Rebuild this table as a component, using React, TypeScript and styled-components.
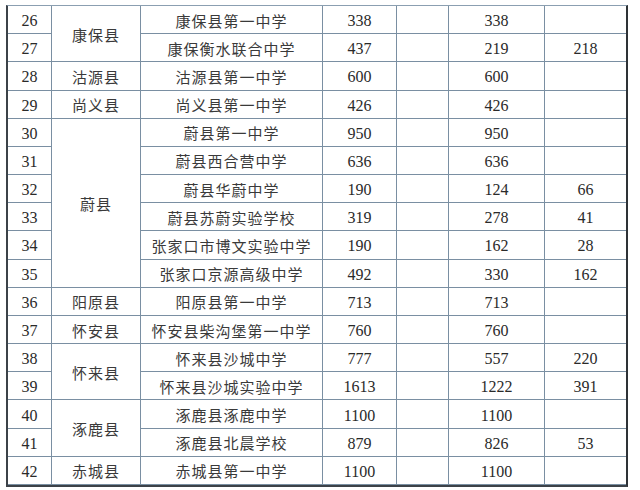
import React from "react";
import styled, { createGlobalStyle } from "styled-components";

const Global = createGlobalStyle`
  html, body { margin: 0; padding: 0; background: #ffffff; }
  body { width: 640px; height: 490px; overflow: hidden; }
`;

const Page = styled.div`
  padding: 5px 0 0 6px;
`;

const Grid = styled.div`
  display: grid;
  grid-template-columns: 44px 89px 182px 74px 52px 96px 81px;
  grid-template-rows: repeat(17, 1fr);
  height: 479px;
  width: 618px;
  border-top: 1px solid #8b9fb1;
  border-left: 2px solid #3c4248;
  border-right: 2px solid #2e3236;
  border-bottom: 2px solid #3c4248;
  color: #2a2a2a;
`;

const Cell = styled.div<{ $span?: number; $last?: boolean }>`
  display: flex;
  align-items: center;
  justify-content: center;
  padding-top: 3px;
  box-sizing: border-box;
  border-right: ${(p) => (p.$last ? "none" : "1px solid #7a8fa2")};
  border-bottom: 1px solid #7a8fa2;
  grid-row: ${(p) => (p.$span ? `span ${p.$span}` : "auto")};
  font-family: "Liberation Serif", serif;
  font-size: 16px;
  white-space: nowrap;
`;

const TextCell = styled(Cell)`
  font-family: "Noto Sans CJK SC", sans-serif;
  font-size: 15px;
  font-weight: 400;
  letter-spacing: 1px;
  padding-top: 1px;
  color: #3a3a3a;
`;

type Row = {
  n: number;
  county?: string;
  span?: number;
  school: string;
  total: string;
  a: string;
  b: string;
};

const H = "\u6000";

const rows: Row[] = [
  { n: 26, county: "康保县", span: 2, school: "康保县第一中学", total: "338", a: "338", b: "" },
  { n: 27, school: "康保衡水联合中学", total: "437", a: "219", b: "218" },
  { n: 28, county: "沽源县", span: 1, school: "沽源县第一中学", total: "600", a: "600", b: "" },
  { n: 29, county: "尚义县", span: 1, school: "尚义县第一中学", total: "426", a: "426", b: "" },
  { n: 30, county: "蔚县", span: 6, school: "蔚县第一中学", total: "950", a: "950", b: "" },
  { n: 31, school: "蔚县西合营中学", total: "636", a: "636", b: "" },
  { n: 32, school: "蔚县华蔚中学", total: "190", a: "124", b: "66" },
  { n: 33, school: "蔚县苏蔚实验学校", total: "319", a: "278", b: "41" },
  { n: 34, school: "张家口市博文实验中学", total: "190", a: "162", b: "28" },
  { n: 35, school: "张家口京源高级中学", total: "492", a: "330", b: "162" },
  { n: 36, county: "阳原县", span: 1, school: "阳原县第一中学", total: "713", a: "713", b: "" },
  { n: 37, county: H + "安县", span: 1, school: H + "安县柴沟堡第一中学", total: "760", a: "760", b: "" },
  { n: 38, county: H + "来县", span: 2, school: H + "来县沙城中学", total: "777", a: "557", b: "220" },
  { n: 39, school: H + "来县沙城实验中学", total: "1613", a: "1222", b: "391" },
  { n: 40, county: "涿鹿县", span: 2, school: "涿鹿县涿鹿中学", total: "1100", a: "1100", b: "" },
  { n: 41, school: "涿鹿县北晨学校", total: "879", a: "826", b: "53" },
  { n: 42, county: "赤城县", span: 1, school: "赤城县第一中学", total: "1100", a: "1100", b: "" },
];

export default function App() {
  return (
    <Page lang="zh-CN">
      <Global />
      <Grid>
        {rows.map((r) => (
          <React.Fragment key={r.n}>
            <Cell>{r.n}</Cell>
            {r.county && <TextCell $span={r.span}>{r.county}</TextCell>}
            <TextCell>{r.school}</TextCell>
            <Cell>{r.total}</Cell>
            <Cell />
            <Cell>{r.a}</Cell>
            <Cell $last>{r.b}</Cell>
          </React.Fragment>
        ))}
      </Grid>
    </Page>
  );
}
